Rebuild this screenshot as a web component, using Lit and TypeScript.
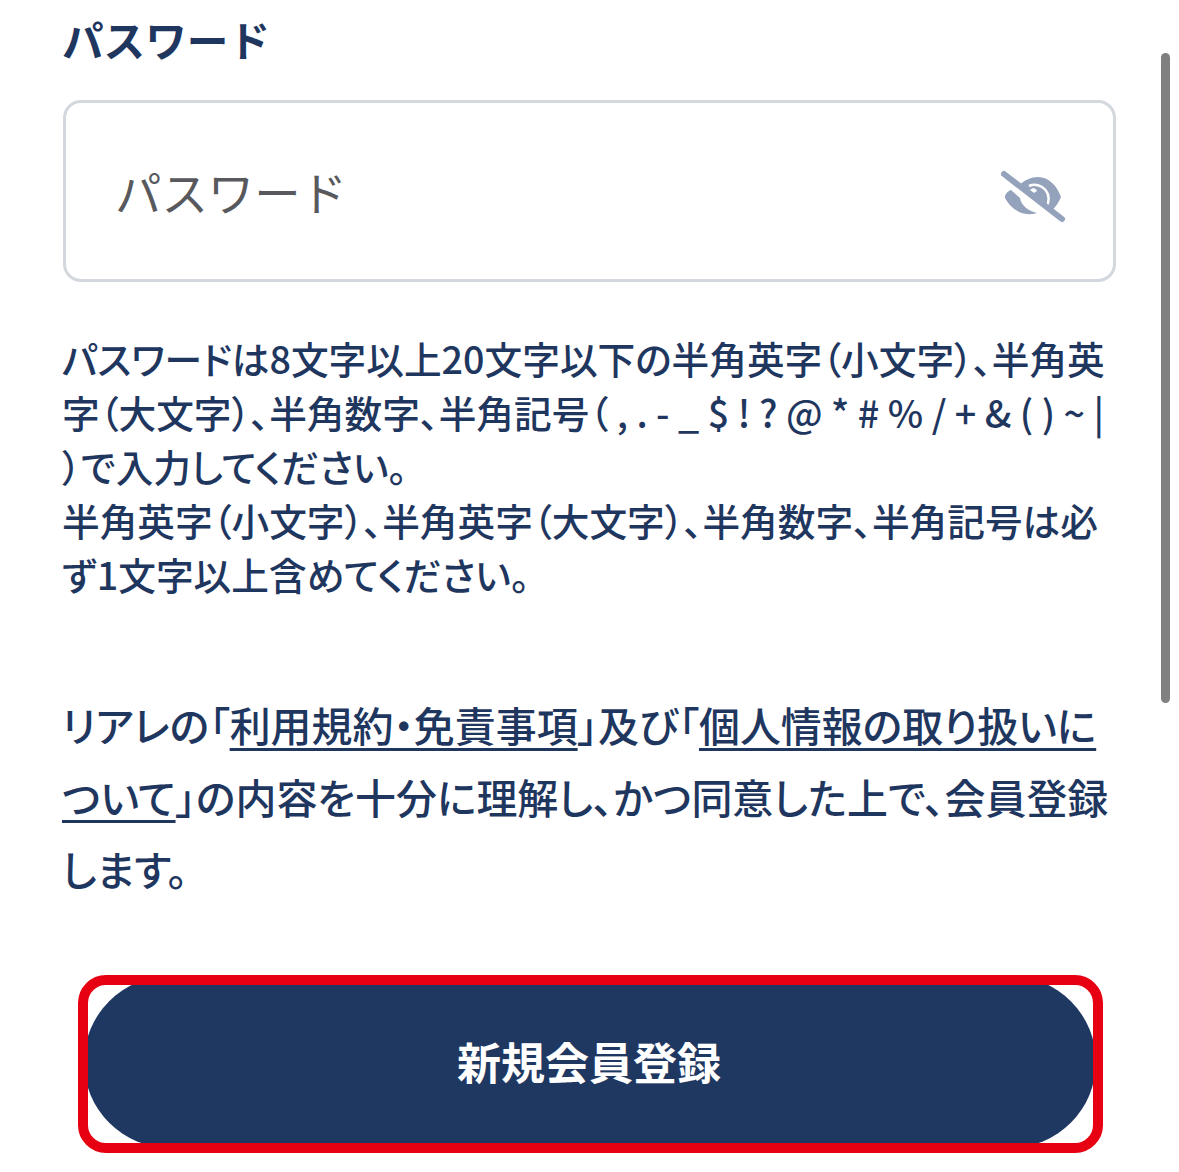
import { LitElement, html, css } from "lit";
import { customElement } from "lit/decorators.js";

@customElement("app-root")
export class AppRoot extends LitElement {
  static styles = css`
    :host {
      display: block;
      position: relative;
      width: 1179px;
      height: 1172px;
      overflow: hidden;
      background: #fff;
      box-sizing: border-box;
      font-family: "Noto Sans CJK JP", "Noto Sans", sans-serif;
      color: #1f375f;
      font-feature-settings: "palt";
    }
    .page {
      display: flex;
      flex-direction: column;
      padding: 0 63px;
      width: 1053px;
    }
    .label {
      margin: 9px 0 0 -1px;
      height: 62px;
      font-size: 41.6px;
      line-height: 60px;
      font-weight: 700;
      font-feature-settings: normal;
    }
    .field {
      margin-top: 29px;
      height: 182px;
      box-sizing: border-box;
      border: 3px solid #d3d7de;
      border-radius: 18px;
      display: flex;
      align-items: center;
      justify-content: space-between;
      padding: 0 38px 0 49px;
    }
    .placeholder {
      font-size: 46.4px;
      line-height: 60px;
      color: #58595c;
      font-weight: 400;
      font-feature-settings: normal;
    }
    .eye {
      width: 80px;
      height: 64px;
      display: block;
      margin-top: 12px;
    }
    .hint {
      margin: 49px 0 0 -1px;
      font-size: 37.68px;
      line-height: 54px;
      font-weight: 500;
    }
    .terms {
      margin: 87px 0 0 -1px;
      font-size: 40.95px;
      line-height: 72px;
      font-weight: 500;
    }
    .terms a {
      color: inherit;
      text-decoration: underline;
      text-underline-offset: 6px;
      text-decoration-thickness: 3px;
    }
    .cta {
      margin: 72px 20px 0 21px;
      height: 172px;
      box-sizing: border-box;
      padding: 0 2px 2px 0;
      border-radius: 86px;
      background: #1f3862;
      color: #fff;
      display: flex;
      align-items: center;
      justify-content: center;
      font-size: 44px;
      font-weight: 700;
      font-feature-settings: normal;
    }
    .mark {
      position: absolute;
      left: 78px;
      top: 975px;
      width: 1025px;
      height: 178px;
      box-sizing: border-box;
      border: 10px solid #e60012;
      border-radius: 28px;
      pointer-events: none;
    }
    .thumb {
      position: absolute;
      left: 1161px;
      top: 53px;
      width: 9px;
      height: 650px;
      border-radius: 5px;
      background: #808080;
    }
  `;

  render() {
    return html`
      <div class="page">
        <div class="label">パスワード</div>
        <div class="field">
          <span class="placeholder">パスワード</span>
          <svg class="eye" viewBox="0 0 80 64" aria-hidden="true">
            <path fill="#94a3bb" d="M24 20C30 15 36 12 43 12C54 12 62 21 66 32C64 37 60 43 55 47z"/>
            <path fill="none" stroke="#fff" stroke-width="2.5" d="M34 21A14 14 0 0 1 51 42"/>
            <path fill="#fff" d="M35 25C38 22 41 23 42 26L39 28z"/>
            <path fill="#94a3bb" d="M10 31C11 28 13 26 16 25L25 33C26 40 33 46 42 48C30 52 17 46 10 33z"/>
            <path fill="none" stroke="#94a3bb" stroke-width="6" stroke-linecap="round" d="M9 9L67 54"/>
          </svg>
        </div>
        <p class="hint">パスワードは8文字以上20文字以下の半角英字（小文字）、半角英字（大文字）、半角数字、半角記号（ , . - _ $ ! ? @ * # % / + & ( ) ~ | ）で入力してください。<br />半角英字（小文字）、半角英字（大文字）、半角数字、半角記号は必ず1文字以上含めてください。</p>
        <p class="terms">リアレの「<a href="#">利用規約・免責事項</a>」及び「<a href="#">個人情報の取り扱いについて</a>」の内容を十分に理解し、かつ同意した上で、会員登録します。</p>
        <div class="cta">新規会員登録</div>
      </div>
      <div class="mark"></div>
      <div class="thumb"></div>
    `;
  }
}
